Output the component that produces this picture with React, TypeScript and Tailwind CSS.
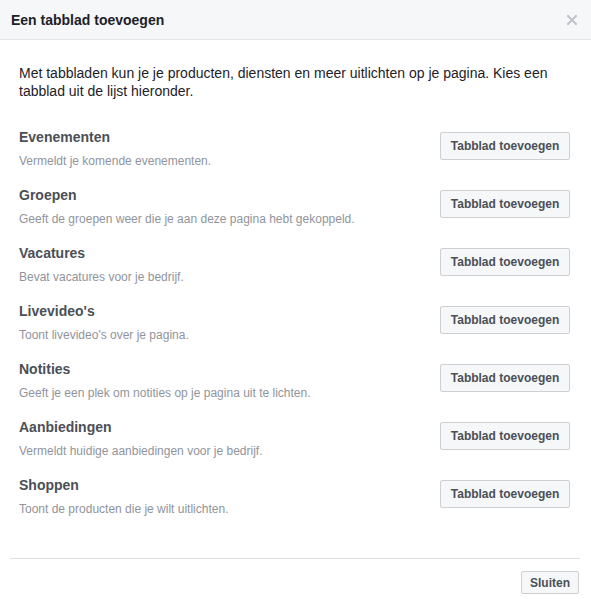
import React from "react";

const rows = [
  { t: "Evenementen", d: "Vermeldt je komende evenementen." },
  { t: "Groepen", d: "Geeft de groepen weer die je aan deze pagina hebt gekoppeld." },
  { t: "Vacatures", d: "Bevat vacatures voor je bedrijf." },
  { t: "Livevideo's", d: "Toont livevideo's over je pagina." },
  { t: "Notities", d: "Geeft je een plek om notities op je pagina uit te lichten." },
  { t: "Aanbiedingen", d: "Vermeldt huidige aanbiedingen voor je bedrijf." },
  { t: "Shoppen", d: "Toont de producten die je wilt uitlichten." },
];

export default function App() {
  return (
    <div
      className="w-[591px] h-[599px] bg-white flex flex-col overflow-hidden"
      style={{ fontFamily: '"Liberation Sans", Arial, Helvetica, sans-serif' }}
    >
      <div className="h-[40px] shrink-0 bg-[#f6f7f9] border-b border-[#e5e5e5] flex items-center justify-between pl-[11px] pr-[14px]">
        <span className="text-[14px] font-bold text-[#1d2129] leading-[18px]">Een tabblad toevoegen</span>
        <svg width="10" height="10" viewBox="0 0 10 10" className="mt-[1px]">
          <path d="M1 1 L9 9 M9 1 L1 9" stroke="#bec2c9" strokeWidth="2" strokeLinecap="square" />
        </svg>
      </div>
      <div className="pt-[24px] pl-[19px] pr-[19px]">
        <p className="text-[14px] leading-[18px] text-[#1d2129]">
          Met tabbladen kun je je producten, diensten en meer uitlichten op je pagina. Kies een tabblad uit de lijst hieronder.
        </p>
        <div className="mt-[28px] flex flex-col">
          {rows.map((r) => (
            <div key={r.t} className="h-[58px] flex justify-between items-start pr-[2px]">
              <div className="flex flex-col">
                <span className="text-[14px] font-bold leading-[18px] text-[#4b4f56]">{r.t}</span>
                <span className="mt-[7px] text-[12px] leading-[16px] text-[#90949c]">{r.d}</span>
              </div>
              <button className="mt-[4px] h-[28px] w-[130px] rounded-[2px] border border-[#ced0d4] bg-[#f6f7f9] text-[12px] font-bold text-[#4b4f56] leading-none">
                Tabblad toevoegen
              </button>
            </div>
          ))}
        </div>
      </div>
      <div className="mt-[24px] ml-[10px] mr-[11px] border-t border-[#dddfe2] pt-[12px] pr-[1px] flex justify-end">
        <button className="h-[23px] px-[8px] w-[58px] rounded-[2px] border border-[#ced0d4] bg-[#f6f7f9] text-[12px] font-bold text-[#4b4f56] leading-none">
          Sluiten
        </button>
      </div>
    </div>
  );
}
